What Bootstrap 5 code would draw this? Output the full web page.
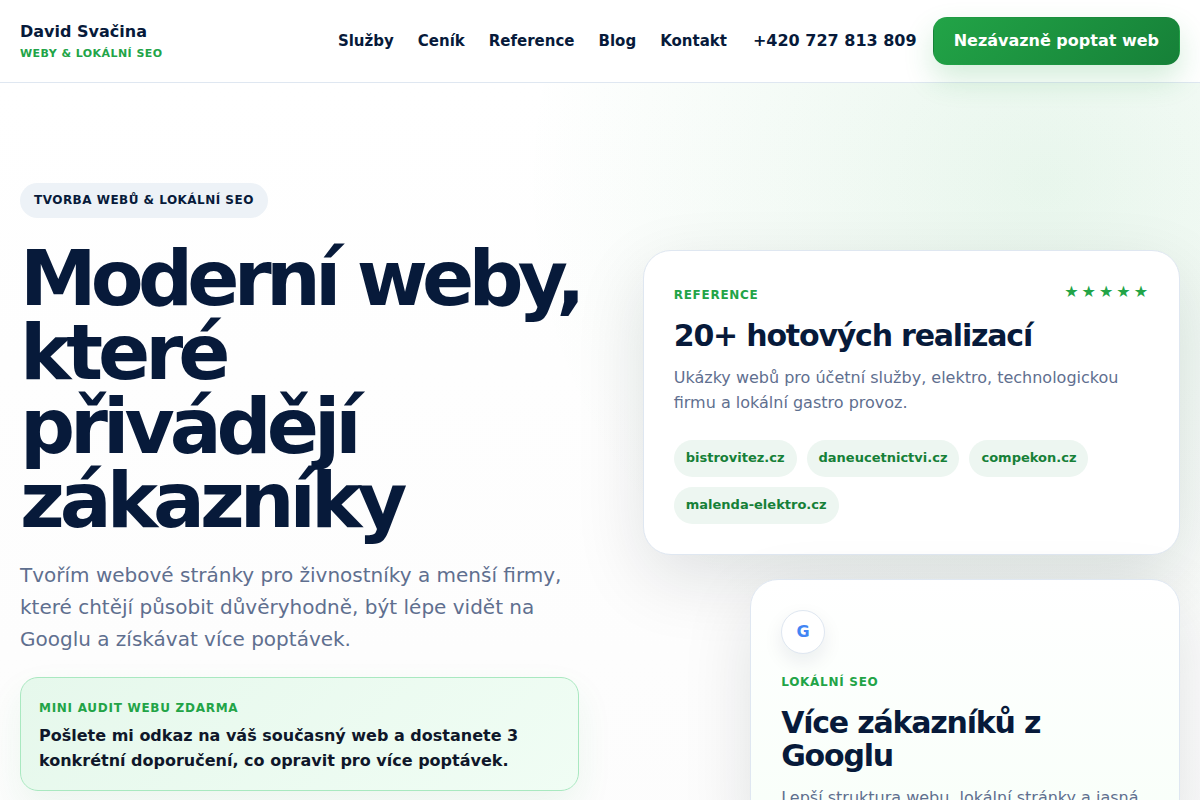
<!DOCTYPE html>
<html lang="cs">
<head>
<meta charset="utf-8">
<meta name="viewport" content="width=device-width, initial-scale=1">
<title>David Svačina – Weby &amp; lokální SEO</title>
<link href="https://cdn.jsdelivr.net/npm/bootstrap@5.3.0/dist/css/bootstrap.min.css" rel="stylesheet">
<style>
  :root { --ink: #071a3a; --muted: #5f6f8f; --green: #22a447; --green-dark: #168038; --line: #dfe7f1; }
  body { font-family: "DejaVu Sans", sans-serif; color: var(--ink); background: #fff; }
  a { text-decoration: none; color: inherit; }
  .page-x { padding-left: 20px; padding-right: 20px; }
  .site-header { border-bottom: 1px solid var(--line); min-height: 83px; }
  .brand-name { font-size: 16px; line-height: 26px; font-weight: 700; }
  .brand-sub { font-size: 11px; line-height: 18px; font-weight: 700; letter-spacing: 0.04em; color: var(--green); }
  .main-links { gap: 24px; font-size: 15px; font-weight: 700; }
  .phone { font-size: 16px; font-weight: 700; margin-left: 26px; }
  .btn-cta { margin-left: 16px; height: 48px; padding: 0 20px; border: 1px solid transparent; border-radius: 14px;
    background: linear-gradient(135deg, #22a447, #168038); color: #fff; font-size: 16px; font-weight: 700;
    box-shadow: 0 14px 30px rgba(34, 164, 71, .2); }
  .btn-cta:hover { color: #fff; }
  .hero { padding-top: 100px; padding-bottom: 100px;
    background: radial-gradient(circle at 87% 100px, rgba(34, 170, 75, .1), transparent 520px), linear-gradient(180deg, #fff, #fcfcfc); }
  .hero-grid { display: grid; grid-template-columns: minmax(0, 1.04fr) minmax(0, 1fr); gap: 64px; }
  .eyebrow { display: inline-block; padding: 8px 14px; border-radius: 99px; background: #edf2f7; font-size: 12px;
    line-height: 19px; font-weight: 700; letter-spacing: 0.04em; }
  .hero-title { margin: 24px 0 21px; font-size: 77px; line-height: 74px; font-weight: 700; letter-spacing: -0.065em; }
  .title-opening { display: block; letter-spacing: -0.075em; }
  @media (min-width: 1200px) { .title-opening { white-space: nowrap; } }
  .hero-lead { margin: 0 0 22px; font-size: 20px; line-height: 32px; color: var(--muted); }
  .audit { padding: 20px 18px 17px; border: 1px solid #a9e8c0; border-radius: 18px; background: linear-gradient(135deg, #e6f8ec, #f0fdf4);
    box-shadow: 0 16px 36px rgba(34, 164, 71, .08); }
  .kicker { font-size: 12px; line-height: 20px; font-weight: 700; letter-spacing: 0.06em; color: var(--green); }
  .audit-text { margin: 5px 0 0; font-size: 16px; line-height: 25px; font-weight: 700; color: #0f172a; }
  .hero-cards { display: flex; flex-direction: column; gap: 24px; padding-top: 67px; }
  .panel { padding: 30px; border: 1px solid var(--line); border-radius: 28px; background: #fff;
    box-shadow: 0 24px 70px rgba(10, 24, 36, .12); }
  .panel-seo { width: 80%; margin-left: auto; background: linear-gradient(180deg, #fff, #f8fff9); }
  .panel h2 { margin: 14px 0 13px; font-size: 30px; line-height: 33px; font-weight: 700; letter-spacing: -0.04em; }
  .panel p { margin: 0; font-size: 16px; line-height: 25px; color: var(--muted); }
  .stars { margin-right: -2px; color: var(--green); font-size: 16px; line-height: 22px; letter-spacing: 3px; }
  .site-tags { gap: 10px; margin-top: 25px; }
  .site-tag { padding: 7px 12px 9px; border-radius: 99px; background: #edf6f1; color: var(--green-dark); font-size: 13px;
    line-height: 21px; font-weight: 700; }
  .g-mark { width: 44px; height: 44px; margin-bottom: 18px; border: 1px solid var(--line); background: #fff; color: #4285f4; font-size: 16px;
    font-weight: 700; box-shadow: 0 8px 20px rgba(7, 26, 58, .08); }
</style>
</head>
<body>
<header class="site-header page-x d-flex flex-wrap align-items-center justify-content-between">
  <a href="#" class="d-block">
    <div class="brand-name">David Svačina</div>
    <div class="brand-sub">WEBY &amp; LOKÁLNÍ SEO</div>
  </a>
  <div class="d-flex flex-wrap align-items-center">
    <nav class="main-links d-flex flex-wrap" aria-label="Hlavní">
      <a href="#sluzby">Služby</a>
      <a href="#cenik">Ceník</a>
      <a href="#reference">Reference</a>
      <a href="#blog">Blog</a>
      <a href="#kontakt">Kontakt</a>
    </nav>
    <a class="phone" href="tel:+420727813809">+420 727 813 809</a>
    <button type="button" class="btn btn-cta">Nezávazně poptat web</button>
  </div>
</header>
<main class="hero page-x">
  <div class="hero-grid">
    <section>
      <div class="eyebrow">TVORBA WEBŮ &amp; LOKÁLNÍ SEO</div>
      <h1 class="hero-title"><span class="title-opening">Moderní weby,</span> které přivádějí zákazníky</h1>
      <p class="hero-lead">Tvořím webové stránky pro živnostníky a menší firmy, které chtějí působit důvěryhodně, být lépe vidět na Googlu a získávat více poptávek.</p>
      <div class="audit">
        <div class="kicker">MINI AUDIT WEBU ZDARMA</div>
        <p class="audit-text">Pošlete mi odkaz na váš současný web a dostanete 3 konkrétní doporučení, co opravit pro více poptávek.</p>
      </div>
    </section>
    <section class="hero-cards">
      <article class="panel" id="reference">
        <div class="d-flex justify-content-between align-items-start">
          <div class="kicker pt-1">REFERENCE</div>
          <div class="stars" aria-label="5 z 5">★★★★★</div>
        </div>
        <h2>20+ hotových realizací</h2>
        <p>Ukázky webů pro účetní služby, elektro, technologickou firmu a lokální gastro provoz.</p>
        <div class="site-tags d-flex flex-wrap">
          <a class="site-tag" href="#">bistrovitez.cz</a>
          <a class="site-tag" href="#">daneucetnictvi.cz</a>
          <a class="site-tag" href="#">compekon.cz</a>
          <a class="site-tag" href="#">malenda-elektro.cz</a>
        </div>
      </article>
      <article class="panel panel-seo">
        <div class="g-mark rounded-circle d-flex align-items-center justify-content-center">G</div>
        <div class="kicker">LOKÁLNÍ SEO</div>
        <h2>Více zákazníků z Googlu</h2>
        <p>Lepší struktura webu, lokální stránky a jasná</p>
      </article>
    </section>
  </div>
</main>
<script src="https://cdn.jsdelivr.net/npm/bootstrap@5.3.0/dist/js/bootstrap.bundle.min.js"></script>
</body>
</html>
